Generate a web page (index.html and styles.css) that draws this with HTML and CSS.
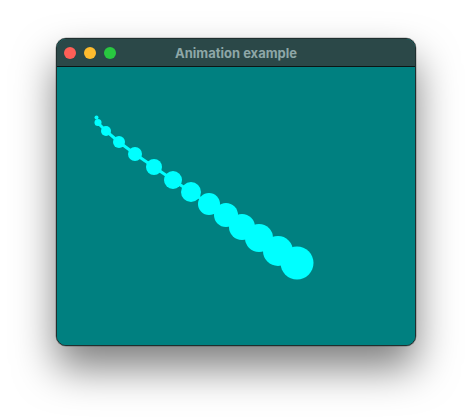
FILE: index.html
```html
<!DOCTYPE html>
<html>
<head>
<meta charset="utf-8">
<link rel="stylesheet" href="styles.css">
</head>
<body>
<div class="window">
  <div class="titlebar">
    <div class="lights">
      <span class="light red"></span>
      <span class="light yellow"></span>
      <span class="light green"></span>
    </div>
    <div class="title">Animation example</div>
  </div>
  <div class="content">
    <svg class="canvas" width="360" height="279" viewBox="0 0 360 279">
      <g fill="#00ffff" stroke="none">
        <polyline points="42,56 50,64 63,75 79,87 98,100 117,113 135,125 153,137 170,148 186,160 203,171 222,184 241,196" fill="none" stroke="#00ffff" stroke-width="3"/>
        <circle cx="40.5" cy="50.5" r="2"/>
        <circle cx="42" cy="55.5" r="3.5"/>
        <circle cx="50" cy="64" r="5"/>
        <circle cx="63" cy="75" r="6"/>
        <circle cx="79" cy="87" r="7"/>
        <circle cx="98" cy="100" r="8"/>
        <circle cx="117" cy="113" r="9"/>
        <circle cx="135" cy="125" r="10"/>
        <circle cx="153" cy="137" r="11"/>
        <circle cx="170" cy="148" r="12"/>
        <circle cx="186" cy="160" r="13"/>
        <circle cx="203" cy="171" r="14"/>
        <circle cx="222" cy="184" r="15"/>
        <circle cx="241" cy="196" r="16.5"/>
      </g>
    </svg>
  </div>
</div>
</body>
</html>
```
FILE: styles.css
```css
html, body {
  margin: 0;
  padding: 0;
  background: #ffffff;
}
body {
  padding: 38px 0 0 56px;
  width: 472px;
  height: 420px;
  box-sizing: border-box;
  overflow: hidden;
}
.window {
  width: 360px;
  height: 308px;
  box-sizing: border-box;
  border: 1px solid #1f2f2f;
  border-radius: 10px;
  overflow: hidden;
  display: flex;
  flex-direction: column;
  box-shadow: 0 22px 40px rgba(0, 0, 0, 0.5), 0 0 0 0.5px rgba(0,0,0,0.3);
  background: #008080;
}
.titlebar {
  height: 27px;
  flex: none;
  background: #2b4848;
  border-bottom: 1px solid #0c1414;
  display: flex;
  align-items: center;
  position: relative;
}
.lights {
  display: flex;
  gap: 8px;
  padding-left: 7px;
}
.light {
  width: 12px;
  height: 12px;
  border-radius: 50%;
  display: block;
}
.red { background: #ff5f57; }
.yellow { background: #febc2e; }
.green { background: #28c840; }
.title {
  position: absolute;
  left: 0;
  right: 0;
  top: 0;
  bottom: 0;
  display: flex;
  align-items: center;
  justify-content: center;
  font-family: Inter, "Liberation Sans", sans-serif;
  font-weight: 700;
  font-size: 13px;
  color: #8ea7a7;
}
.content {
  flex: 1;
  background: #008080;
  position: relative;
}
.canvas {
  display: block;
  position: absolute;
  left: -1px;
  top: 0;
}
```
